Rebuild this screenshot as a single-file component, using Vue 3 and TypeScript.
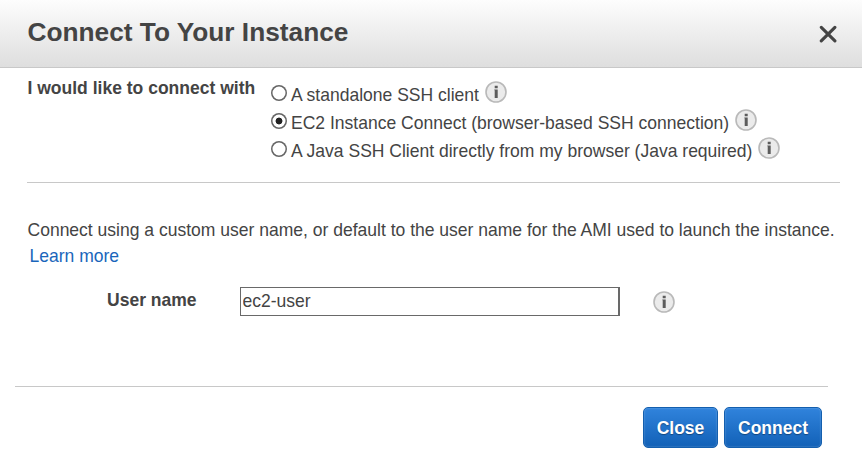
<script setup lang="ts">
import { ref } from 'vue'

interface ConnectOption {
  id: string
  label: string
}

const options: ConnectOption[] = [
  { id: 'standalone', label: 'A standalone SSH client' },
  { id: 'ec2', label: 'EC2 Instance Connect (browser-based SSH connection)' },
  { id: 'java', label: 'A Java SSH Client directly from my browser (Java required)' },
]
const selected = ref('ec2')
const userName = ref('ec2-user')
</script>

<template>
  <div class="dialog">
    <header class="header">
      <h1 class="title">Connect To Your Instance</h1>
      <button class="dismiss" type="button" aria-label="Close dialog">
        <svg width="18" height="18" viewBox="0 0 18 18">
          <path d="M2.3 2.3L15.9 15.9M15.9 2.3L2.3 15.9" stroke="#444" stroke-width="3.1" stroke-linecap="round" />
        </svg>
      </button>
    </header>

    <section class="method">
      <div class="method-label">I would like to connect with</div>
      <div class="options">
        <div v-for="option in options" :key="option.id" class="option">
          <label class="choice">
            <input v-model="selected" class="radio" type="radio" name="method" :value="option.id" />
            <span class="choice-text">{{ option.label }}</span>
          </label>
          <svg class="info" width="22" height="22" viewBox="0 0 22 22">
            <circle cx="11" cy="11" r="10" fill="#ebebeb" stroke="#b9b9b9" stroke-width="1.6" />
            <path d="M9.7 4.8h3v2.4h-3zM9.3 8.4h3.4v8.5h-3v-7.6h-.4z" fill="#5c5c5c" />
          </svg>
        </div>
      </div>
    </section>

    <section class="account">
      <p class="hint">Connect using a custom user name, or default to the user name for the AMI used to launch the instance.</p>
      <a class="learn">Learn more</a>
      <div class="field">
        <label class="field-label" for="user">User name</label>
        <input id="user" v-model="userName" class="field-input" type="text" />
        <svg class="field-info" width="22" height="22" viewBox="0 0 22 22">
          <circle cx="11" cy="11" r="10" fill="#ebebeb" stroke="#b9b9b9" stroke-width="1.6" />
          <path d="M9.7 4.8h3v2.4h-3zM9.3 8.4h3.4v8.5h-3v-7.6h-.4z" fill="#5c5c5c" />
        </svg>
      </div>
    </section>

    <footer class="footer">
      <button class="btn btn-close" type="button">Close</button>
      <button class="btn btn-connect" type="button">Connect</button>
    </footer>
  </div>
</template>

<style>
body {
  background: #fff;
}
</style>

<style scoped>
.dialog {
  box-sizing: border-box;
  width: 862px;
  height: 467px;
  overflow: hidden;
  font-family: "Liberation Sans", Arial, sans-serif;
  font-size: 17.52px;
  color: #444;
}
.header {
  box-sizing: border-box;
  display: flex;
  justify-content: space-between;
  height: 68px;
  padding: 0 25px 0 27.5px;
  border-bottom: 1px solid #c8c8c8;
  background: linear-gradient(#fdfdfd, #dedede);
}
.title {
  margin: 16px 0 0;
  font-size: 26.25px;
  line-height: 32px;
  font-weight: bold;
  white-space: nowrap;
}
.dismiss {
  width: 18px;
  height: 18px;
  margin-top: 25px;
  padding: 0;
  border: 0;
  background: none;
}
.dismiss svg {
  display: block;
}
.method {
  box-sizing: border-box;
  display: flex;
  height: 115px;
  margin: 0 22px 0 27px;
  border-bottom: 1px solid #c8c8c8;
}
.method-label {
  box-sizing: border-box;
  width: 244px;
  padding: 9px 0 0 0.5px;
  line-height: 22px;
  font-weight: bold;
  white-space: nowrap;
}
.options {
  padding-top: 11px;
}
.option {
  display: flex;
  height: 28px;
}
.choice {
  display: flex;
  white-space: nowrap;
}
.radio {
  appearance: none;
  box-sizing: border-box;
  width: 16px;
  height: 16px;
  margin: 6px 4px 0 0;
  border: 0;
  border-radius: 50%;
  background: #fff;
  box-shadow: inset 0 0 0 1.5px #666;
}
.radio:checked {
  background: radial-gradient(circle, #222 3px, #fff 3.8px);
}
.choice-text {
  padding-top: 5px;
  line-height: 22px;
}
.info {
  margin: 2px 0 0 5.6px;
}
.account {
  box-sizing: border-box;
  height: 203px;
  padding: 36px 0 0 27.5px;
}
.hint {
  margin: 0;
  line-height: 22px;
  white-space: nowrap;
}
.learn {
  display: block;
  margin: 4px 0 0 2px;
  line-height: 22px;
  color: #1a66bb;
}
.field {
  display: flex;
  margin-top: 20px;
  padding-left: 79.5px;
}
.field-label {
  width: 133px;
  padding-top: 2px;
  line-height: 22px;
  font-weight: bold;
}
.field-input {
  box-sizing: border-box;
  width: 380px;
  height: 29px;
  padding: 0 1.5px;
  border: 1px solid #696969;
  border-right-width: 2px;
  border-radius: 0;
  outline: 0;
  font: inherit;
  color: #444;
}
.field-info {
  margin: 4px 0 0 33px;
}
.footer {
  display: flex;
  justify-content: flex-end;
  gap: 6px;
  margin: 0 34px 0 15px;
  padding: 20px 6px 0 0;
  border-top: 1px solid #c8c8c8;
}
.btn {
  box-sizing: border-box;
  height: 41px;
  padding: 0;
  border: 1px solid #145fae;
  border-radius: 5px;
  background: linear-gradient(#3083dc, #1261b7);
  box-shadow: inset 0 0 2px rgba(255, 255, 255, 0.35);
  font: bold 17.5px/22px "Liberation Sans", Arial, sans-serif;
  color: #fff;
  text-shadow: 0 1px 1px rgba(0, 0, 0, 0.35);
}
.btn-close {
  width: 75px;
}
.btn-connect {
  width: 98px;
}
</style>
